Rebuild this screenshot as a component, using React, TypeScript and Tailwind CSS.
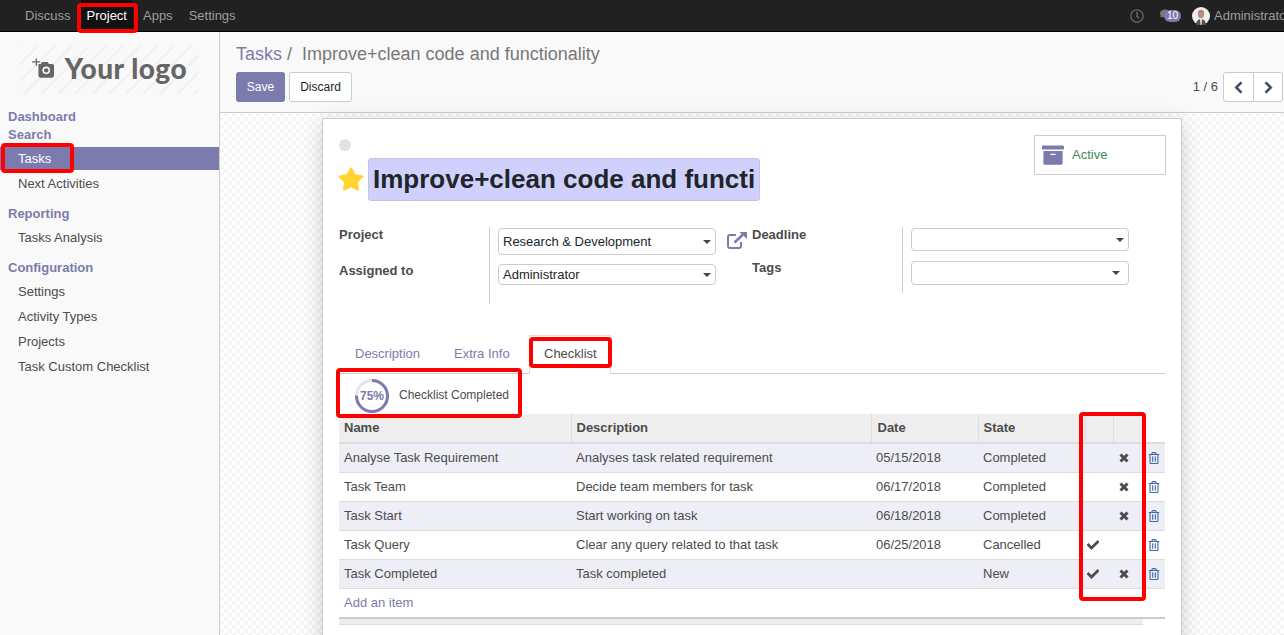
import { FaArchive, FaCheck, FaChevronLeft, FaChevronRight, FaComments, FaRegClock, FaRegTrashAlt, FaStar } from 'react-icons/fa'

const rows = [
  { name: 'Analyse Task Requirement', description: 'Analyses task related requirement', date: '05/15/2018', state: 'Completed', check: false, cross: true },
  { name: 'Task Team', description: 'Decide team members for task', date: '06/17/2018', state: 'Completed', check: false, cross: true },
  { name: 'Task Start', description: 'Start working on task', date: '06/18/2018', state: 'Completed', check: false, cross: true },
  { name: 'Task Query', description: 'Clear any query related to that task', date: '06/25/2018', state: 'Cancelled', check: true, cross: false },
  { name: 'Task Completed', description: 'Task completed', date: '', state: 'New', check: true, cross: true },
]

function MenuSection({ title, items }: { title: string; items: string[] }) {
  return (
    <div className="mt-[9px]">
      <div className="h-[18px] pl-2 text-[13px] leading-[18px] font-bold text-[#7c7bad]">{title}</div>
      <div className="mt-[2px]">
        {items.map((item) => (
          <div key={item} className="h-[25px] pl-[18px] text-[13px] leading-[25px] text-[#4c4c4c]">
            {item}
          </div>
        ))}
      </div>
    </div>
  )
}

function Select({ value, className, caret = 'pr-1' }: { value?: string; className: string; caret?: string }) {
  return (
    <div className={`flex items-center justify-between w-[218px] bg-white border border-[#ccc] rounded pl-1 text-[13px] text-[#212529] ${caret} ${className}`}>
      <span>{value}</span>
      <span className="border-x-[4px] border-x-transparent border-t-[4px] border-t-[#444]" />
    </div>
  )
}

function Avatar() {
  return (
    <svg width="18" height="18" viewBox="0 0 18 18">
      <circle cx="9" cy="9" r="9" fill="#f2f0ee" />
      <ellipse cx="9" cy="7" rx="3.2" ry="4.2" fill="#b98f7c" />
      <path d="M5.8 5.5C6 3 12 3 12.2 5.5 10.5 4.5 7.5 4.5 5.8 5.5Z" fill="#8b8580" />
      <path d="M4 18c0-4 2.5-6 5-6s5 2 5 6Z" fill="#55504d" />
      <path d="M8 12h2l-.5 6h-1Z" fill="#e8e8e8" />
    </svg>
  )
}

function ExternalLink() {
  return (
    <svg width="20" height="17" viewBox="0 0 20 17" className="mt-[5px] shrink-0" fill="none" stroke="#7c7bad" strokeWidth="2">
      <path d="M9 3H3a2 2 0 0 0-2 2v9a2 2 0 0 0 2 2h9a2 2 0 0 0 2-2v-4" />
      <path d="M7.500 10.500 16 2.500" strokeWidth="2.600" />
      <path d="M12.500 0H20V7Z" fill="#7c7bad" stroke="none" />
    </svg>
  )
}

function Cross() {
  return (
    <svg width="10" height="10" viewBox="0 0 10 10" className="ml-[3px]">
      <path d="M1.500 1.500 8.500 8.500M8.500 1.500 1.500 8.500" stroke="#4c4c4c" strokeWidth="3" />
    </svg>
  )
}

function RedBox({ className }: { className: string }) {
  return <div className={`absolute border-4 border-[#f00] rounded-sm pointer-events-none ${className}`} />
}

export default function App() {
  return (
    <div className="relative flex flex-col h-[635px] overflow-hidden bg-white font-['Liberation_Sans',Arial,sans-serif] text-[13px] text-[#4c4c4c]">
      <header className="flex items-center justify-between h-8 shrink-0 bg-[#212121] border-b border-black text-[13px] text-[#9d9d9d]">
        <nav className="flex h-full pl-[15px]">
          <span className="px-2.5 leading-[31px]">Discuss</span>
          <span className="px-[6px] leading-[31px] bg-[#111] text-white">Project</span>
          <span className="pl-[10px] pr-2 leading-[31px]">Apps</span>
          <span className="px-2 leading-[31px]">Settings</span>
        </nav>
        <div className="flex items-center">
          <FaRegClock className="mr-[16px] text-[14px] text-[#666]" />
          <div className="relative mr-[11px] w-[21px] h-3.5">
            <FaComments className="absolute left-0 -top-[1px] text-[14px] text-[#777]" />
            <span className="absolute right-0 top-[1px] h-3 px-[3px] rounded-full bg-[#7c7bad] text-[10px] leading-3 text-white">10</span>
          </div>
          <Avatar />
          <span className="ml-[4px] w-[70px] whitespace-nowrap">Administrator</span>
        </div>
      </header>

      <div className="flex flex-1 min-h-0">
        <aside className="w-[220px] shrink-0 bg-[#f9f9f9] border-r border-[#ccc]">
          <div className="flex items-center justify-center mx-5 mt-3.5 h-12 pb-1 bg-[repeating-linear-gradient(135deg,#f1f1f1_0_2px,#f9f9f9_2px_12px)]">
            <svg width="22" height="21" viewBox="0 0 24 22" className="mr-[11px]">
              <path d="M4 3V0h1.500v3H9v1.500H5.500V8H4V4.500H0V3Z" fill="#666" />
              <path d="M7 6h2.500l1.500-2h6l1.500 2H22a2 2 0 0 1 2 2v11a2 2 0 0 1-2 2H9a2 2 0 0 1-2-2Z" fill="#666" />
              <circle cx="15.500" cy="13" r="4.200" fill="#f9f9f9" />
              <circle cx="15.500" cy="13" r="2.400" fill="#666" />
            </svg>
            <span className="font-['Lato',sans-serif] text-[28px] leading-none font-black tracking-[0.5px] text-[#666]">Your logo</span>
          </div>
          <div className="mt-[14px] h-[18px] pl-2 leading-[18px] font-bold text-[#7c7bad]">Dashboard</div>
          <div className="h-[18px] pl-2 leading-[18px] font-bold text-[#7c7bad]">Search</div>
          <div className="mt-[3px] h-[23px] pl-[18px] leading-[23px] bg-[#7c7bad] text-white">Tasks</div>
          <div className="mt-px h-[25px] pl-[18px] leading-[25px]">Next Activities</div>
          <MenuSection title="Reporting" items={['Tasks Analysis']} />
          <MenuSection title="Configuration" items={['Settings', 'Activity Types', 'Projects', 'Task Custom Checklist']} />
        </aside>

        <main className="flex flex-col flex-1 min-w-0">
          <div className="shrink-0 h-[81px] px-4 bg-[#f9f9f9] border-b border-[#ccc]">
            <div className="pt-[9px] h-[40px] text-[18px] leading-[26px] text-[#777]">
              <span className="text-[#7c7bad]">Tasks</span>
              <span className="ml-[5px]">/</span>
              <span className="ml-[10px]">Improve+clean code and functionality</span>
            </div>
            <div className="flex items-center justify-between">
              <div className="flex gap-1">
                <button className="w-[49px] h-[30px] rounded-[3px] bg-[#7c7bad] text-[12px] text-white">Save</button>
                <button className="w-[63px] h-[30px] rounded-[3px] bg-white border border-[#ccc] text-[12px] text-[#212529]">Discard</button>
              </div>
              <div className="flex items-center -mr-[15px]">
                <span className="mr-[5px] text-[13px] text-[#4c4c4c]">1 / 6</span>
                <button className="flex items-center justify-center w-[31px] h-[30px] rounded-l-[3px] bg-white border border-[#ccc] text-[13px] text-[#3c4a63]"><FaChevronLeft stroke="currentColor" strokeWidth={30} /></button>
                <button className="flex items-center justify-center w-[30px] h-[30px] -ml-px rounded-r-[3px] bg-white border border-[#ccc] text-[13px] text-[#3c4a63]"><FaChevronRight stroke="currentColor" strokeWidth={30} /></button>
              </div>
            </div>
          </div>

          <div className="flex-1 min-h-0 bg-[#fff] bg-[repeating-conic-gradient(#f5f5f5_0_25%,#fff_0_50%)] bg-[length:8px_8px]">
            <div className="relative w-[860px] h-[600px] mt-[5px] ml-[102px] pt-[20px] px-4 bg-white border border-[#ccc] shadow-[0_5px_20px_-1px_rgba(0,0,0,0.2)]">
              <div className="absolute right-[15px] top-[16px] flex items-center w-[132px] h-10 pl-[7px] border border-[#ccc]">
                <FaArchive className="text-[22px] text-[#7c7bad]" />
                <span className="ml-2 text-[#3e8a5c]">Active</span>
              </div>
              <div className="w-3 h-3 rounded-full bg-[#e2e2e2]" />
              <div className="flex items-center mt-[7px] -ml-px">
                <FaStar className="w-[26px] h-[26px] -mt-[2px] text-[#ffd42f]" />
                <div className="ml-[4px] w-[392px] h-[43px] px-[4px] rounded-[3px] bg-[#d0d0fc] border border-[#c4c4e4] text-[26px] leading-[40px] font-bold text-[#212529] overflow-hidden whitespace-nowrap">
                  Improve+clean code and functi
                </div>
              </div>

              <div className="flex mt-[26px] h-[77px]">
                <div className="w-[150px] shrink-0 font-bold text-[13px]">
                  <div className="h-4 leading-4">Project</div>
                  <div className="mt-5 h-4 leading-4">Assigned to</div>
                </div>
                <div className="w-[238px] shrink-0 pl-2 pt-[1px] border-l border-[#ccc]">
                  <Select value="Research & Development" className="h-[27px]" />
                  <Select value="Administrator" className="mt-[9px] h-[21px]" />
                </div>
                <ExternalLink />
                <div className="w-[150px] ml-[5px] shrink-0 font-bold text-[13px]">
                  <div className="h-4 leading-4">Deadline</div>
                  <div className="mt-[17px] h-4 leading-4">Tags</div>
                </div>
                <div className="h-[66px] pl-2 pt-[1px] border-l border-[#ccc]">
                  <Select className="h-[23px]" />
                  <Select className="mt-[10px] h-[24px]" caret="pr-2" />
                </div>
              </div>

              <div className="flex items-end h-[31px] mt-[39px] pl-[1px] border-b border-[#ccc]">
                <div className="flex h-[39px] -mb-px items-center">
                  <span className="w-[99px] pl-[15px] -mt-[2px] text-[#7c7bad]">Description</span>
                  <span className="w-[90px] pl-[15px] -mt-[2px] text-[#7c7bad]">Extra Info</span>
                  <span className="w-[82px] h-full pt-[8px] pl-[14px] bg-white border border-[#ddd] border-b-white">Checklist</span>
                </div>
              </div>

              <div className="flex items-center h-10 pt-1 pl-[15px]">
                <svg width="36" height="36" viewBox="0 0 36 36">
                  <circle cx="18" cy="18" r="15.500" fill="none" stroke="#e4e4ee" strokeWidth="3" />
                  <circle cx="18" cy="18" r="15.500" fill="none" stroke="#7c7bad" strokeWidth="3" strokeDasharray="73 97.400" transform="rotate(-90 18 18)" />
                  <text x="18" y="22" textAnchor="middle" fontSize="12" fontWeight="700" fill="#7c7bad">75%</text>
                </svg>
                <span className="ml-[9px] -mt-[2px] text-[12px]">Checklist Completed</span>
              </div>

              <table className="w-[826px] table-fixed border-collapse text-[13px]">
                <colgroup>
                  <col className="w-[232px]" />
                  <col className="w-[300px]" />
                  <col className="w-[107px]" />
                  <col className="w-[107px]" />
                  <col className="w-[28px]" />
                  <col className="w-[30px]" />
                  <col className="w-[22px]" />
                </colgroup>
                <thead>
                  <tr className="h-[29px] bg-[#eee] border-b-2 border-[#ddd] font-bold">
                    <th className="px-[5px] text-left border-r border-[#ddd]">Name</th>
                    <th className="px-[5px] text-left border-r border-[#ddd]">Description</th>
                    <th className="pl-[6px] text-left border-r border-[#ddd]">Date</th>
                    <th className="px-[5px] text-left border-r border-[#ddd]">State</th>
                    <th className="border-r border-[#ddd]" />
                    <th />
                    <th className="bg-white" />
                  </tr>
                </thead>
                <tbody>
                  {rows.map((row, i) => (
                    <tr key={row.name} className={`h-[29px] border-b border-[#ddd] ${i % 2 === 0 ? 'bg-[#eeeef7]' : 'bg-white'}`}>
                      <td className="px-[5px]">{row.name}</td>
                      <td className="px-[5px]">{row.description}</td>
                      <td className="px-[5px]">{row.date}</td>
                      <td className="px-[5px]">{row.state}</td>
                      <td className="pl-[2px]">{row.check && <FaCheck className="text-[12px]" stroke="currentColor" strokeWidth={25} />}</td>
                      <td className="pl-[3px]">{row.cross && <Cross />}</td>
                      <td className="pl-[5px]"><FaRegTrashAlt className="text-[12px] text-[#3f6aa8]" /></td>
                    </tr>
                  ))}
                  <tr className="h-[29px]">
                    <td colSpan={7} className="px-[5px] text-[#7c7bad]">Add an item</td>
                  </tr>
                </tbody>
              </table>
              <div className="w-[826px] border-t-2 border-[#ccc]">
                <div className="w-[804px] h-[6px] bg-[#eee] border-b border-[#ddd]" />
              </div>
            </div>
          </div>
        </main>
      </div>

      <RedBox className="left-[77px] top-[3px] w-[61px] h-[30px]" />
      <RedBox className="left-[1px] top-[143px] w-[73px] h-[30px]" />
      <RedBox className="left-[529px] top-[337px] w-[83px] h-[31px]" />
      <RedBox className="left-[336px] top-[368px] w-[186px] h-[50px]" />
      <RedBox className="left-[1079px] top-[412px] w-[67px] h-[189px]" />
    </div>
  )
}
